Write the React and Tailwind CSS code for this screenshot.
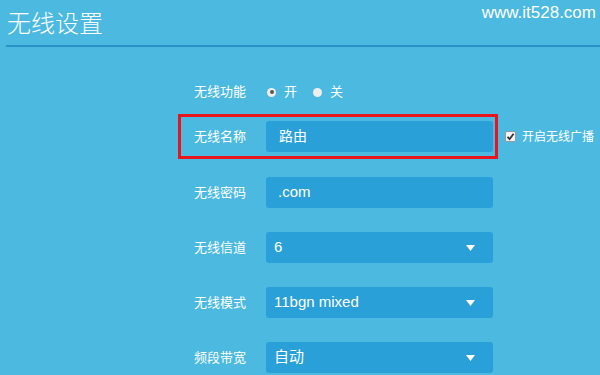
import React from 'react';

const font = { fontFamily: '"Liberation Sans", "Noto Sans CJK SC", sans-serif' };

function Caret() {
  return (
    <svg width="9" height="6" viewBox="0 0 9 6" className="shrink-0">
      <path d="M0 0 H9 L4.5 6 Z" fill="#ffffff" />
    </svg>
  );
}

function Row({ label, value, select }) {
  return (
    <div className="flex items-center pl-4">
      <span className="w-[72px] text-[13px] text-white">{label}</span>
      <div className="flex h-[31px] w-[227px] items-center justify-between rounded-[3px] bg-[#2aa0d8] pl-2 pr-[18px] text-[15px] text-white">
        <span>{value}</span>
        {select && <Caret />}
      </div>
    </div>
  );
}

export default function App() {
  return (
    <div style={font} className="h-[375px] w-[600px] overflow-hidden bg-[#4bb9e0] text-white">
      <div className="ml-[6px] flex h-[47px] items-start justify-between border-b-2 border-[#2a90c8]">
        <h1 className="ml-px mt-[8px] text-[24px] font-light leading-[32px]">无线设置</h1>
        <span className="mr-[4px] mt-[2px] text-[17px] leading-[22px]">www.it528.com</span>
      </div>

      <div className="flex flex-col pl-[178px]">
        <div className="mt-[35px] flex h-[20px] items-center pl-4 text-[13px]">
          <span className="w-[72px]">无线功能</span>
          <span className="ml-[1px] flex h-[9px] w-[9px] items-center justify-center rounded-full bg-[#eeeeee]">
            <span className="h-[4px] w-[4px] rounded-full bg-[#555555]" />
          </span>
          <span className="ml-[8px]">开</span>
          <span className="ml-[16px] h-[9px] w-[9px] rounded-full bg-[#eeeeee]" />
          <span className="ml-[8px]">关</span>
        </div>

        <div className="mt-[12px] flex items-center">
          <div className="flex h-[45px] w-[320px] items-center border-[3px] border-[#e8151c] pl-[13px]">
            <span className="w-[72px] text-[13px]">无线名称</span>
            <div className="flex h-[31px] w-[227px] items-center rounded-[3px] bg-[#2aa0d8] pl-[13px] text-[14px]">
              路由
            </div>
          </div>
          <span className="ml-[7px] flex h-[11px] w-[11px] items-center justify-center rounded-[2px] border border-[#999999] bg-[#f4f4f4]">
            <svg width="9" height="9" viewBox="0 0 9 9">
              <path d="M1.5 4.8 L3.6 7 L7.6 1.8" fill="none" stroke="#333333" strokeWidth="1.8" />
            </svg>
          </span>
          <span className="ml-[6px] text-[12px]">开启无线广播</span>
        </div>

        <div className="mt-[18px] flex flex-col gap-[24px]">
          <div className="flex items-center pl-4">
            <span className="w-[72px] text-[13px]">无线密码</span>
            <div className="flex h-[31px] w-[227px] items-center rounded-[3px] bg-[#2aa0d8] pl-[12px] text-[15px]">
              .com
            </div>
          </div>
          <Row label="无线信道" value="6" select />
          <Row label="无线模式" value="11bgn mixed" select />
          <Row label="频段带宽" value="自动" select />
        </div>
      </div>
    </div>
  );
}
